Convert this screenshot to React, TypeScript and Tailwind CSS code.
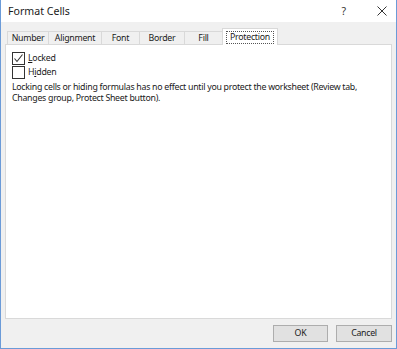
import React from "react";

const tabs = [
  { label: "Number", w: "w-[42px]" },
  { label: "Alignment", w: "w-[53px]" },
  { label: "Font", w: "w-[38px]" },
  { label: "Border", w: "w-[45px]" },
  { label: "Fill", w: "w-[38px]" },
];

function CheckBox({ checked }: { checked?: boolean }) {
  return (
    <span className="w-[13px] h-[13px] border border-[#333333] bg-white flex items-center justify-center shrink-0">
      {checked && (
        <svg width="11" height="11" viewBox="0 0 11 11">
          <path d="M1.5 5.5 L4 8.5 L9.5 1.5" fill="none" stroke="#333333" strokeWidth="1.1" />
        </svg>
      )}
    </span>
  );
}

export default function App() {
  return (
    <div
      className="w-[397px] h-[349px] flex flex-col bg-[#f0f0f0] border-l border-r border-b border-[#6b9bd8] text-[#000000]"
      style={{ fontFamily: '"Noto Sans", "Open Sans", sans-serif' }}
    >
      {/* title bar */}
      <div className="h-[22px] bg-white flex items-center shrink-0">
        <span className="pl-[7px] text-[10.6px] leading-none text-[#1a1a1a]">Format Cells</span>
        <span className="ml-auto text-[10.5px] leading-none text-[#333333] mr-[31px]">?</span>
        <svg width="10" height="10" viewBox="0 0 10 10" className="mr-[9px]">
          <path d="M0.5 0.5 L9.5 9.5 M9.5 0.5 L0.5 9.5" stroke="#333333" strokeWidth="1" />
        </svg>
      </div>

      <div className="flex-1 flex flex-col px-[4px] text-[8.8px] tracking-[-0.28px] text-[#1a1a1a]">
        {/* tabs */}
        <div className="h-[22px] flex items-end pl-[2px] shrink-0">
          {tabs.map((t, i) => (
            <div
              key={t.label}
              className={`${t.w} h-[13px] border-t border-[#d9d9d9] ${i === 0 ? "border-l" : ""} border-r flex items-center justify-center leading-none`}
            >
              {t.label}
            </div>
          ))}
          <div className="w-[56px] h-[17px] -ml-px -mb-px relative bg-white border-t border-l border-r border-[#d9d9d9] flex items-center justify-center">
            <span className="border border-dotted border-[#555555] px-[3px] leading-[11px]">Protection</span>
          </div>
        </div>

        {/* panel */}
        <div className="h-[275px] bg-white border border-[#d9d9d9] px-[6px] pt-[7px]">
          <div className="flex items-center gap-[3px] h-[13px]">
            <CheckBox checked />
            <span className="leading-none">
              <span className="underline">L</span>ocked
            </span>
          </div>
          <div className="flex items-center gap-[3px] h-[13px] mt-[1px]">
            <CheckBox />
            <span className="leading-none">
              H<span className="underline">i</span>dden
            </span>
          </div>
          <p className="mt-[3px] leading-[11px]">
            Locking cells or hiding formulas has no effect until you protect the worksheet (Review tab,
            Changes group, Protect Sheet button).
          </p>
        </div>

        {/* footer */}
        <div className="flex-1 flex items-center justify-end gap-[8px]">
          <button className="w-[55px] h-[17px] bg-[#e1e1e1] border border-[#adadad] leading-none">OK</button>
          <button className="w-[56px] h-[17px] bg-[#e1e1e1] border border-[#adadad] leading-none">Cancel</button>
        </div>
      </div>
    </div>
  );
}
